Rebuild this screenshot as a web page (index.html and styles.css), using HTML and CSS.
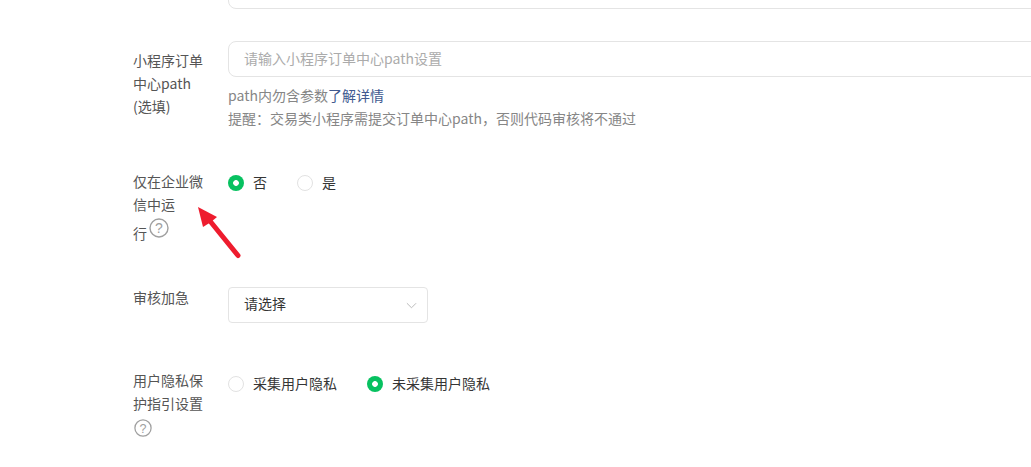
FILE: index.html
```html
<!DOCTYPE html>
<html lang="zh-CN">
<head>
<meta charset="utf-8">
<title>表单</title>
<link rel="stylesheet" href="styles.css">
</head>
<body>
<main class="form">
  <div class="row row-top">
    <div class="label"></div>
    <div class="control"><div class="input"></div></div>
  </div>
  <div class="row row-path">
    <div class="label">小程序订单<br>中心path<br>(选填)</div>
    <div class="control">
      <div class="input placeholder">请输入小程序订单中心path设置</div>
      <p class="hint first">path内勿含参数<a class="link">了解详情</a></p>
      <p class="hint">提醒：交易类小程序需提交订单中心path，否则代码审核将不通过</p>
    </div>
  </div>
  <div class="row row-wework">
    <div class="label">仅在企业微<br>信中运<br>行<svg class="help help-inline" viewBox="0 0 20 20"><circle cx="10" cy="10" r="9" /><text x="10" y="15" text-anchor="middle">?</text></svg></div>
    <div class="control radios gap-wide">
      <label class="radio"><span class="dot on"></span>否</label>
      <label class="radio"><span class="dot"></span>是</label>
    </div>
  </div>
  <div class="row row-urgent">
    <div class="label">审核加急</div>
    <div class="control">
      <div class="select">请选择<svg class="chevron" viewBox="0 0 12 7"><path d="M1 1l5 5 5-5" /></svg></div>
    </div>
  </div>
  <div class="row row-privacy">
    <div class="label">用户隐私保<br>护指引设置<svg class="help help-block" viewBox="0 0 20 20"><circle cx="10" cy="10" r="9" /><text x="10" y="15" text-anchor="middle">?</text></svg></div>
    <div class="control radios gap-narrow">
      <label class="radio"><span class="dot"></span>采集用户隐私</label>
      <label class="radio"><span class="dot on"></span>未采集用户隐私</label>
    </div>
  </div>
</main>
<svg class="arrow" viewBox="0 0 50 60" aria-hidden="true">
  <path class="arrow-shaft" d="M40 48.500L12 14" />
  <path class="arrow-head" d="M0 0L19 10L13 15L5 20Z" />
</svg>
</body>
</html>
```
FILE: styles.css
```css
html, body {
  margin: 0;
  padding: 0;
  height: 467px;
  overflow: hidden;
  background: #fff;
}
body {
  position: relative;
  font-family: "Noto Sans CJK SC", "Noto Sans", sans-serif;
  font-size: 14px;
  color: #353535;
}
.form {
  width: 1060px;
  margin-top: -27px;
  padding-left: 133px;
}
.row {
  display: flex;
}
.label {
  width: 71px;
  margin-right: 24px;
  flex: none;
  line-height: 23px;
  padding-top: 8px;
  color: #555;
}
.control {
  flex: 1;
  min-width: 0;
}
.input {
  height: 34px;
  border: 1px solid #e4e4e4;
  border-radius: 8px;
  padding: 0 16px 0 15px;
  line-height: 32px;
}
.placeholder {
  color: #ababab;
}
.hint {
  margin: 0;
  line-height: 23px;
  color: #868686;
}
.hint.first {
  margin-top: 7px;
}
.link {
  color: #40598f;
}
.row-path { margin-top: 32px; }
.row-wework { margin-top: 33px; }
.row-urgent { margin-top: 42px; }
.row-privacy { margin-top: 41px; }
.row-wework .label { padding-top: 7px; }
.row-urgent .label { padding-top: 0; line-height: 21px; }
.row-privacy .label { padding-top: 5px; }
.radios {
  display: flex;
  align-items: flex-start;
  line-height: 23px;
  padding-top: 8px;
}
.gap-wide { gap: 30px; }
.gap-narrow { gap: 30px; }
.radio {
  display: flex;
  align-items: center;
  gap: 9px;
  color: #353535;
}
.dot {
  width: 14px;
  height: 14px;
  border: 1px solid #e2e2e2;
  border-radius: 50%;
  background: #fff;
  flex: none;
}
.dot.on {
  width: 16px;
  height: 16px;
  border: 0;
  background: radial-gradient(circle, #fff 0 2.5px, #07c160 3.2px);
}
.select {
  width: 167px;
  height: 34px;
  border: 1px solid #e4e4e4;
  border-radius: 4px;
  padding: 0 16px 0 15px;
  line-height: 30px;
  display: flex;
  justify-content: space-between;
  align-items: flex-start;
  color: #353535;
}
.chevron {
  width: 11px;
  height: 7px;
  margin: 14px -6px 0 0;
  fill: none;
  stroke: #b5b5b5;
  stroke-width: 1;
}
.help {
  fill: none;
  stroke: #a0a0a0;
  stroke-width: 1.4;
}
.help text {
  fill: #a0a0a0;
  stroke: none;
  font-family: "Liberation Sans", sans-serif;
  font-size: 14px;
}
.help-inline {
  width: 20px;
  height: 20px;
  margin: 2px 0 0 2px;
  vertical-align: 1px;
}
.help-block {
  display: block;
  width: 18px;
  height: 18px;
  margin: 4px 0 0 1px;
}
.arrow {
  position: absolute;
  left: 198px;
  top: 207px;
  width: 50px;
  height: 60px;
}
.arrow-shaft {
  fill: none;
  stroke: #ee1c2e;
  stroke-width: 5;
  stroke-linecap: round;
}
.arrow-head {
  fill: #ee1c2e;
}
```
